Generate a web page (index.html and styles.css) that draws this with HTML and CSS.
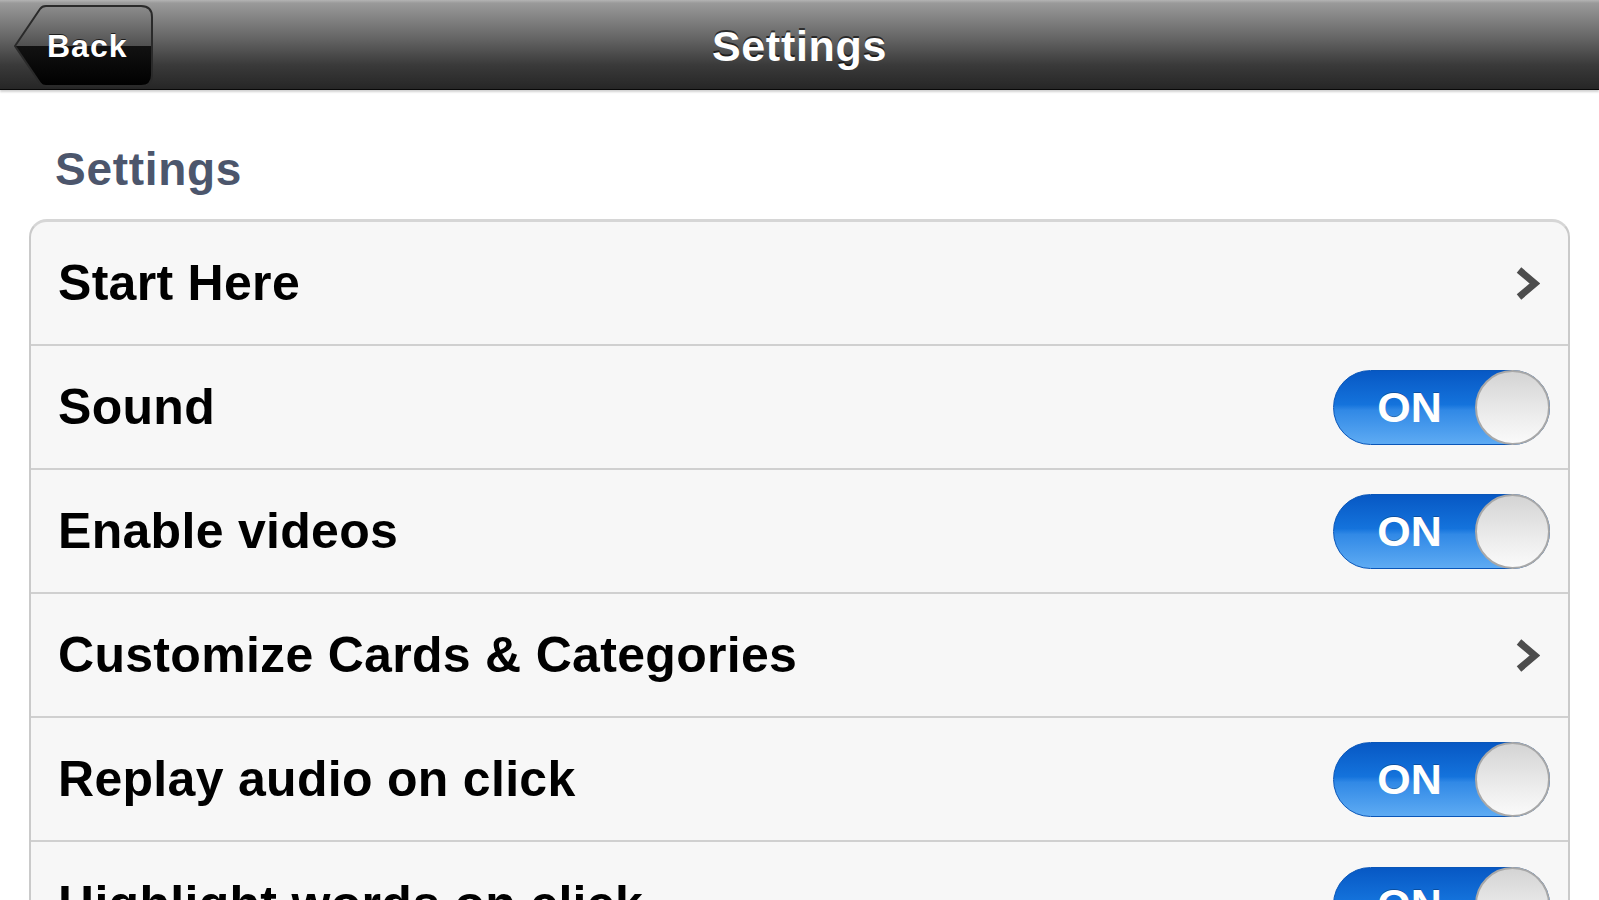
FILE: index.html
```html
<!DOCTYPE html>
<html lang="en">
<head>
    <meta charset="UTF-8">
    <meta name="viewport" content="width=device-width, initial-scale=1.0">
    <title>Settings</title>
    <link rel="stylesheet" href="styles.css">
</head>
<body>

<div class="navbar">
    <div class="nav-left">
        <a class="back-btn" href="#">
            <svg class="back-shape" viewBox="0 0 141 82" preserveAspectRatio="none">
                <defs>
                    <linearGradient id="backGrad" x1="0" y1="0" x2="0" y2="1">
                        <stop offset="0" stop-color="#8c8c8c"/>
                        <stop offset="0.5" stop-color="#505050"/>
                        <stop offset="0.5" stop-color="#121212"/>
                        <stop offset="1" stop-color="#000"/>
                    </linearGradient>
                </defs>
                <path d="M2 41 L27 4 Q29 1 33 1 H128 Q139 1 139 12 V70 Q139 81 128 81 H33 Q29 81 27 78 Z" fill="url(#backGrad)" stroke="#2a2a2a" stroke-width="2"/>
            </svg>
            <span class="back-label">Back</span>
        </a>
    </div>
    <div class="nav-title">Settings</div>
    <div class="nav-right"></div>
</div>

<div class="content">
    <h2 class="section-title">Settings</h2>

    <div class="group">
        <div class="row">
            <span class="row-label">Start Here</span>
            <svg class="chevron" viewBox="0 0 25 35"><path d="M4 4 L20 17.5 L4 31" fill="none" stroke="#4d4d4d" stroke-width="7"/></svg>
        </div>
        <div class="row">
            <span class="row-label">Sound</span>
            <div class="toggle"><span class="toggle-text">ON</span><span class="knob"></span></div>
        </div>
        <div class="row">
            <span class="row-label">Enable videos</span>
            <div class="toggle"><span class="toggle-text">ON</span><span class="knob"></span></div>
        </div>
        <div class="row">
            <span class="row-label">Customize Cards &amp; Categories</span>
            <svg class="chevron" viewBox="0 0 25 35"><path d="M4 4 L20 17.5 L4 31" fill="none" stroke="#4d4d4d" stroke-width="7"/></svg>
        </div>
        <div class="row">
            <span class="row-label">Replay audio on click</span>
            <div class="toggle"><span class="toggle-text">ON</span><span class="knob"></span></div>
        </div>
        <div class="row">
            <span class="row-label">Highlight words on click</span>
            <div class="toggle"><span class="toggle-text">ON</span><span class="knob"></span></div>
        </div>
    </div>
</div>

</body>
</html>
```

FILE: styles.css
```css
body {
    margin: 0;
    font-family: "Liberation Sans", Arial, sans-serif;
    background-color: #ffffff;
    overflow: hidden;
}
.navbar {
    height: 89px;
    display: grid;
    grid-template-columns: 1fr auto 1fr;
    align-items: center;
    background: linear-gradient(to bottom, #b4b4b4 0px, #9a9a9a 3px, #6a6a6a 35px, #3a3a3a 65px, #262626 89px);
    border-bottom: 1px solid #080808;
    box-shadow: 0 2px 2px rgba(0, 0, 0, 0.18);
}
.nav-left {
    display: flex;
    padding-left: 13px;
    padding-top: 2px;
}
.back-btn {
    position: relative;
    width: 141px;
    height: 82px;
    display: flex;
    align-items: center;
    padding-left: 34px;
    box-sizing: border-box;
    text-decoration: none;
}
.back-shape {
    position: absolute;
    left: 0;
    top: 0;
    width: 141px;
    height: 82px;
}
.back-label {
    position: relative;
    color: #ffffff;
    font-size: 32px;
    font-weight: bold;
    line-height: 1;
    letter-spacing: 1px;
    text-shadow: 0 -1px 0 rgba(0, 0, 0, 0.7);
}
.nav-title {
    color: #ffffff;
    font-size: 43px;
    font-weight: bold;
    line-height: 1;
    letter-spacing: 0.7px;
    padding-top: 3px;
    text-shadow: 0 -2px 0 rgba(0, 0, 0, 0.6);
}
.content {
    padding: 0 29px;
}
.section-title {
    margin: 56px 0 27px 26px;
    font-size: 46px;
    line-height: 1;
    font-weight: bold;
    letter-spacing: 0.7px;
    color: #4c566c;
    text-shadow: 0 1px 0 #ffffff;
}
.group {
    background-color: #f7f7f7;
    border: 2px solid #cacaca;
    border-top: 3px solid #d6d6d6;
    border-radius: 18px;
}
.row {
    height: 124px;
    box-sizing: border-box;
    border-bottom: 2px solid #d0d0d0;
    display: flex;
    align-items: center;
    justify-content: space-between;
    padding: 0 18px 0 27px;
}
.row:last-child {
    border-bottom: none;
}
.row-label {
    font-size: 50px;
    font-weight: bold;
    line-height: 1;
    letter-spacing: 0.3px;
    color: #000000;
}
.chevron {
    width: 25px;
    height: 35px;
    margin-right: 10px;
}
.toggle {
    width: 217px;
    height: 75px;
    box-sizing: border-box;
    border-radius: 38px;
    display: flex;
    align-items: center;
    background: linear-gradient(to bottom, #0758c4 0%, #1473dc 46%, #3189e6 54%, #5eabf3 100%);
    border: 1px solid #0a56b8;
}
.toggle-text {
    flex: 1;
    text-align: center;
    color: #ffffff;
    font-size: 43px;
    font-weight: bold;
    line-height: 1;
    padding-left: 10px;
    text-shadow: 0 -1px 0 rgba(0, 0, 0, 0.25);
}
.knob {
    width: 75px;
    height: 75px;
    margin-right: -1px;
    box-sizing: border-box;
    border-radius: 50%;
    border: 2px solid #a8a8a8;
    background: linear-gradient(to bottom, #d4d4d4 0%, #ececec 60%, #fafafa 100%);
}
```
